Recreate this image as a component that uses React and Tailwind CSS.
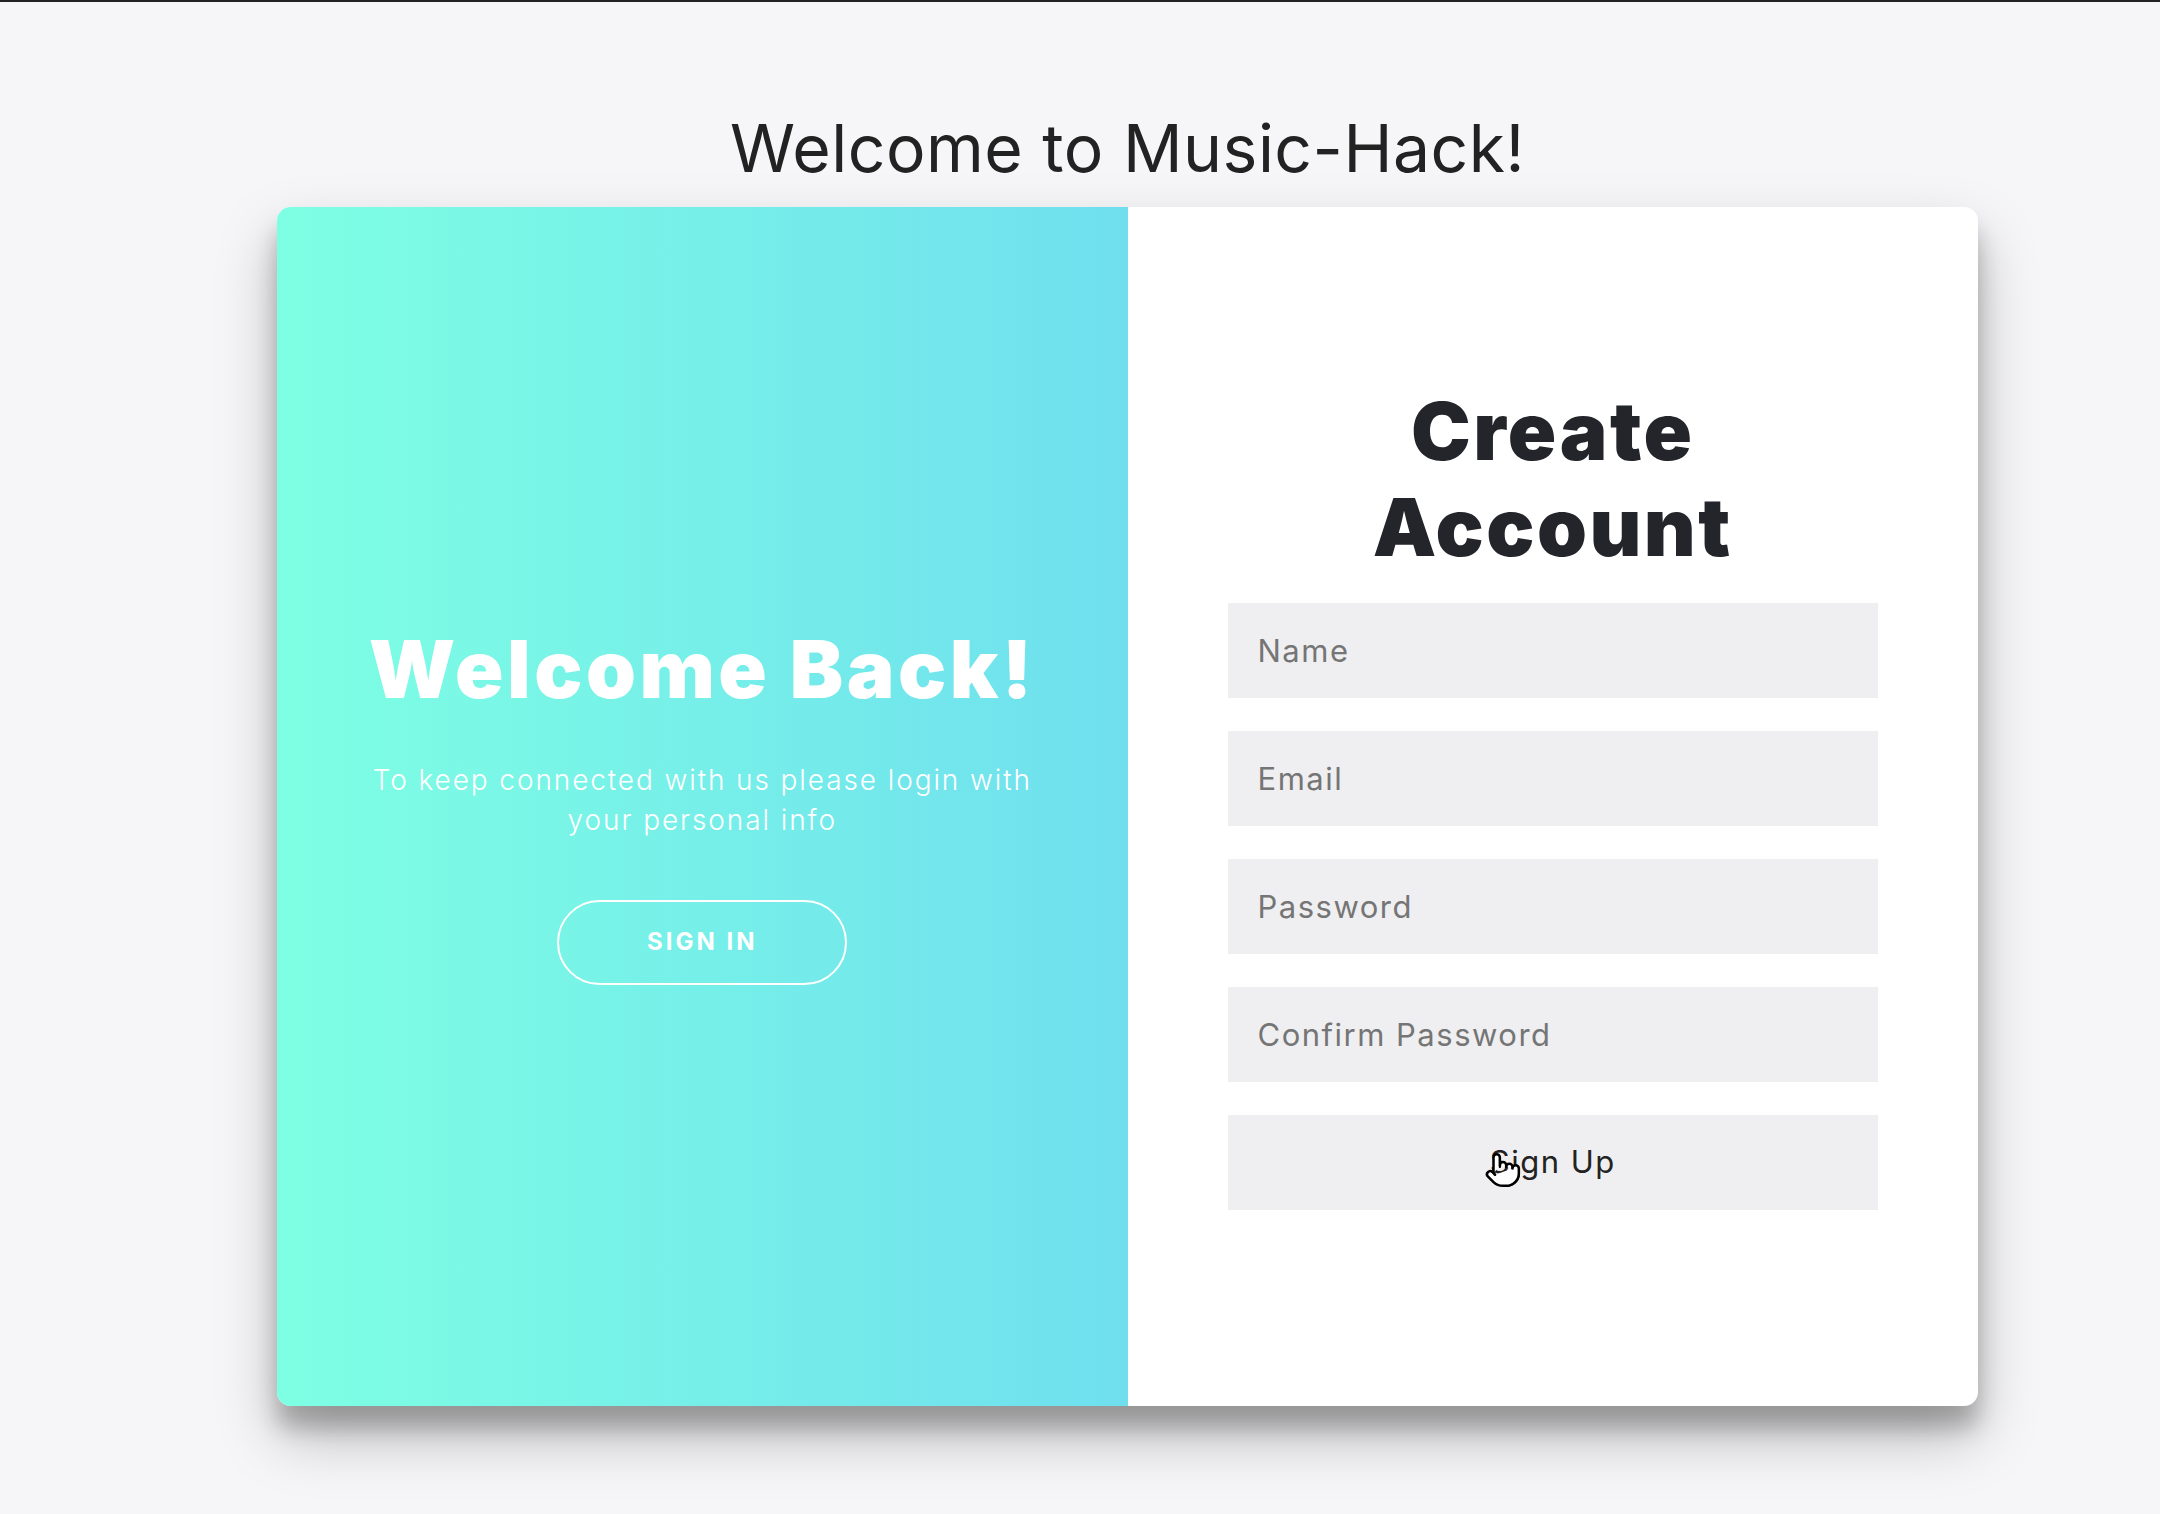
import { Pointer } from 'lucide-react'

const fields = ['Name', 'Email', 'Password', 'Confirm Password']

export default function App() {
  return (
    <div className="min-h-screen w-full border-t-2 border-[#222] bg-[#f6f5f7] font-['Inter',sans-serif]">
      <div className="ml-[277px] w-[1701px] pt-[113px] pb-[120px]">
        {/* Page title */}
        <h2 className="mb-[26px] text-center text-[66px] font-normal leading-none text-[#222] tracking-[0.5px]">
          Welcome to Music-Hack!
        </h2>

        {/* Card */}
        <div className="flex h-[1199px] w-full overflow-hidden rounded-[14px] bg-white shadow-[0_30px_60px_rgba(0,0,0,0.25),0_22px_22px_rgba(0,0,0,0.22)]">
          {/* Left overlay panel */}
          <div className="flex w-1/2 flex-col items-center justify-center bg-gradient-to-r from-[#7effe3] to-[#6fdfee] px-[60px] text-center text-white">
            <h1 className="text-[80px] font-black leading-none tracking-[3.5px]">Welcome Back!</h1>
            <p className="mt-[51px] text-[28px] font-light leading-[40px] tracking-[1.9px]">
              To keep connected with us please login with
              <br />
              your personal info
            </p>
            <button className="mt-[60px] h-[85px] w-[290px] rounded-full border-2 border-white text-[24px] font-bold uppercase tracking-[3px]">
              Sign In
            </button>
          </div>

          {/* Sign up form */}
          <div className="flex w-1/2 flex-col items-center justify-center px-[100px] pb-[20px] text-center">
            <h1 className="mb-[28px] text-[80px] font-black leading-[96px] text-[#23252b] tracking-[2.5px]">
              Create
              <br />
              Account
            </h1>
            <div className="flex w-full flex-col gap-[33px]">
              {fields.map((f) => (
                <input
                  key={f}
                  type={f.includes('Password') ? 'password' : 'text'}
                  placeholder={f}
                  className="h-[95px] w-full bg-[#efeff1] px-[30px] text-[31px] text-[#333] tracking-[1.5px] outline-none placeholder:text-[#757575]"
                />
              ))}
              <button className="relative h-[95px] w-full bg-[#efeff1] text-[31px] text-[#222] tracking-[1.5px]">
                Sign Up
                <Pointer
                  size={38}
                  strokeWidth={1.6}
                  className="absolute left-[256px] top-[36px] fill-white text-black"
                />
              </button>
            </div>
          </div>
        </div>
      </div>
    </div>
  )
}
